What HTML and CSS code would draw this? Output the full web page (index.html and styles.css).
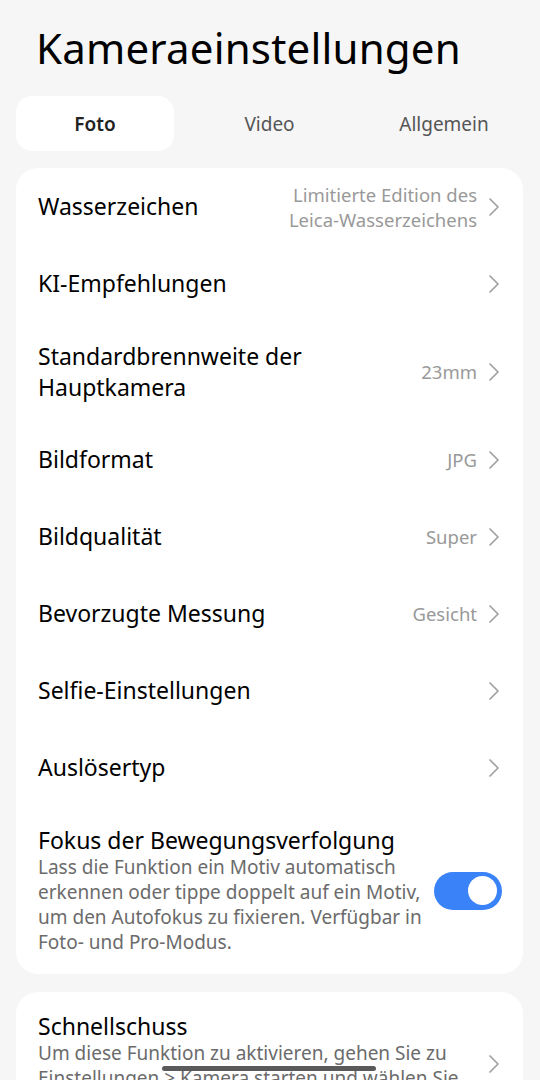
FILE: index.html
```html
<!DOCTYPE html>
<html lang="de">
<head>
    <meta charset="UTF-8">
    <meta name="viewport" content="width=device-width, initial-scale=1.0">
    <title>Kameraeinstellungen</title>
    <link rel="stylesheet" href="styles.css">
</head>
<body>
    <!-- Titel -->
    <header>
        <h1>Kameraeinstellungen</h1>
    </header>

    <!-- Tabs -->
    <nav class="tabs">
        <a class="tab active" href="#">Foto</a>
        <a class="tab" href="#">Video</a>
        <a class="tab" href="#">Allgemein</a>
    </nav>

    <main>
        <section class="card">
            <div class="row">
                <div class="label">Wasserzeichen</div>
                <div class="value">Limitierte Edition des<br>Leica-Wasserzeichens</div>
                <svg class="chev" viewBox="0 0 12 20"><path d="M2 2l8 8-8 8"/></svg>
            </div>
            <div class="row">
                <div class="label">KI-Empfehlungen</div>
                <svg class="chev" viewBox="0 0 12 20"><path d="M2 2l8 8-8 8"/></svg>
            </div>
            <div class="row">
                <div class="label">Standardbrennweite der<br>Hauptkamera</div>
                <div class="value">23mm</div>
                <svg class="chev" viewBox="0 0 12 20"><path d="M2 2l8 8-8 8"/></svg>
            </div>
            <div class="row">
                <div class="label">Bildformat</div>
                <div class="value">JPG</div>
                <svg class="chev" viewBox="0 0 12 20"><path d="M2 2l8 8-8 8"/></svg>
            </div>
            <div class="row">
                <div class="label">Bildqualität</div>
                <div class="value">Super</div>
                <svg class="chev" viewBox="0 0 12 20"><path d="M2 2l8 8-8 8"/></svg>
            </div>
            <div class="row">
                <div class="label">Bevorzugte Messung</div>
                <div class="value">Gesicht</div>
                <svg class="chev" viewBox="0 0 12 20"><path d="M2 2l8 8-8 8"/></svg>
            </div>
            <div class="row">
                <div class="label">Selfie-Einstellungen</div>
                <svg class="chev" viewBox="0 0 12 20"><path d="M2 2l8 8-8 8"/></svg>
            </div>
            <div class="row">
                <div class="label">Auslösertyp</div>
                <svg class="chev" viewBox="0 0 12 20"><path d="M2 2l8 8-8 8"/></svg>
            </div>
            <div class="row row-desc">
                <div class="text">
                    <div class="title">Fokus der Bewegungsverfolgung</div>
                    <p class="desc">Lass die Funktion ein Motiv automatisch<br>erkennen oder tippe doppelt auf ein Motiv,<br>um den Autofokus zu fixieren. Verfügbar in<br>Foto- und Pro-Modus.</p>
                </div>
                <div class="switch on"><span class="knob"></span></div>
            </div>
        </section>

        <section class="card">
            <div class="row row-desc">
                <div class="text">
                    <div class="title">Schnellschuss</div>
                    <p class="desc">Um diese Funktion zu aktivieren, gehen Sie zu<br>Einstellungen &gt; Kamera starten und wählen Sie<br>eine Option aus.</p>
                </div>
                <svg class="chev" viewBox="0 0 12 20"><path d="M2 2l8 8-8 8"/></svg>
            </div>
        </section>
    </main>

    <!-- Gestenleiste -->
    <div class="home-bar"></div>
</body>
</html>
```

FILE: styles.css
```css
body {
    margin: 0;
    font-family: "Noto Sans", Arial, sans-serif;
    background-color: #f6f6f6;
    color: #000;
    height: 1080px;
    overflow: hidden;
}
header {
    padding: 19px 0 0 36px;
}
header h1 {
    margin: 0;
    font-size: 42px;
    font-weight: 400;
    line-height: 58px;
    letter-spacing: 0.2px;
}
.tabs {
    display: grid;
    grid-template-columns: 158px 1fr 158px;
    margin: 19px 17px 17px 16px;
}
.tab {
    height: 55px;
    display: flex;
    align-items: center;
    justify-content: center;
    font-size: 19px;
    color: #555;
    text-decoration: none;
    border-radius: 16px;
}
.tab.active {
    background-color: #fff;
    color: #222;
    font-weight: 600;
}
main {
    padding: 0 17px 0 16px;
}
.card {
    background-color: #fff;
    border-radius: 22px;
    margin-bottom: 18px;
}
.row {
    display: flex;
    align-items: center;
    min-height: 77px;
    box-sizing: border-box;
    padding: 13px 23px 13px 22px;
}
.label {
    flex: 1;
    font-size: 23px;
    line-height: 31px;
    padding: 5.5px 0;
}
.value {
    text-align: right;
    font-size: 18.5px;
    line-height: 25px;
    color: #999;
    margin-right: 11px;
    white-space: nowrap;
}
.chev {
    width: 12px;
    height: 20px;
    fill: none;
    stroke: #a0a0a0;
    stroke-width: 1.7;
    stroke-linecap: round;
    stroke-linejoin: round;
    flex-shrink: 0;
}
.row-desc {
    padding-top: 20px;
    padding-bottom: 19px;
}
.text {
    flex: 1;
    padding-right: 10px;
    white-space: nowrap;
}
.title {
    font-size: 23px;
    line-height: 29px;
}
.desc {
    margin: 0;
    font-size: 19px;
    line-height: 25px;
    color: #6b6b6b;
}
.switch {
    width: 68px;
    height: 38px;
    border-radius: 19px;
    background-color: #3a82f7;
    position: relative;
    flex-shrink: 0;
    margin-right: -2px;
}
.knob {
    position: absolute;
    top: 4.5px;
    right: 5px;
    width: 29px;
    height: 29px;
    border-radius: 50%;
    background-color: #fff;
}
.home-bar {
    position: fixed;
    left: 162px;
    top: 1066px;
    width: 214px;
    height: 5px;
    border-radius: 3px;
    background-color: #5a5a5a;
}
```
